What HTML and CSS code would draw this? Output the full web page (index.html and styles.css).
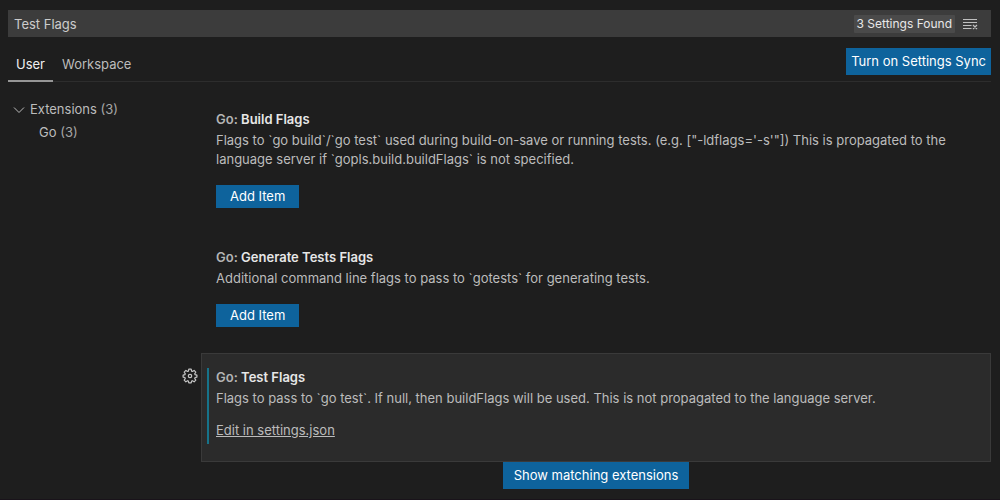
FILE: index.html
```html
<!DOCTYPE html>
<html lang="en">
<head>
<meta charset="utf-8">
<title>Settings</title>
<link rel="stylesheet" href="styles.css">
</head>
<body>
<div class="settings">
  <header class="search">
    <input class="search-input" type="text" value="Test Flags" aria-label="Search settings">
    <span class="count">3 Settings Found</span>
    <button class="icon-button clear" type="button" aria-label="Clear settings search">
      <svg width="16" height="14" viewBox="0 0 16 14" fill="none" stroke="currentColor"><path d="M1 2.500h14M1 5.500h14M1 8.500h8.500M1 11.500h8.500M11 8l4 4M15 8l-4 4" stroke-width="1.200"/></svg>
    </button>
  </header>
  <nav class="tabs">
    <div class="tab-list">
      <button class="tab active" type="button">User</button>
      <button class="tab" type="button">Workspace</button>
    </div>
    <button class="button sync" type="button">Turn on Settings Sync</button>
  </nav>
  <div class="body">
    <aside class="toc">
      <div class="toc-row">
        <svg class="chevron" width="12" height="12" viewBox="0 0 12 12" fill="none" stroke="currentColor"><path d="M1 3.500l5 5 5-5"/></svg>
        <span>Extensions <span class="num">(3)</span></span>
      </div>
      <div class="toc-row child"><span>Go <span class="num">(3)</span></span></div>
    </aside>
    <main class="list">
      <section class="row">
        <div class="item">
          <h2 class="title"><span class="category">Go:</span> Build Flags</h2>
          <p class="desc">Flags to `go build`/`go test` used during build-on-save or running tests. (e.g. ["-ldflags='-s'"]) This is propagated to the language server if `gopls.build.buildFlags` is not specified.</p>
          <button class="button add" type="button">Add Item</button>
        </div>
      </section>
      <section class="row">
        <div class="item">
          <h2 class="title"><span class="category">Go:</span> Generate Tests Flags</h2>
          <p class="desc">Additional command line flags to pass to `gotests` for generating tests.</p>
          <button class="button add" type="button">Add Item</button>
        </div>
      </section>
      <section class="row">
        <button class="icon-button gear" type="button" aria-label="More actions">
          <svg width="16" height="16" viewBox="0 0 16 16" fill="none" stroke="currentColor" stroke-width="1.200" stroke-linejoin="round"><path d="M6.800 1.200h2.400l.4 1.900.8.400 1.700-1.100 1.700 1.700-1.100 1.700.4.900 1.800.4v2l-1.800.400-.4.900 1.100 1.700-1.700 1.700-1.700-1.100-.8.400-.4 1.800H6.800l-.4-1.800-.8-.4-1.700 1.100-1.700-1.700 1.100-1.700-.4-.9-1.800-.4v-2l1.800-.4.400-.9-1.100-1.700 1.700-1.700 1.700 1.100.8-.4z"/><circle cx="8" cy="8" r="1.700"/></svg>
        </button>
        <div class="item focused">
          <div class="modified">
            <h2 class="title"><span class="category">Go:</span> Test Flags</h2>
            <p class="desc">Flags to pass to `go test`. If null, then buildFlags will be used. This is not propagated to the language server.</p>
            <a class="edit" href="#">Edit in settings.json</a>
          </div>
        </div>
      </section>
      <div class="more">
        <button class="button matching" type="button">Show matching extensions</button>
      </div>
    </main>
  </div>
</div>
</body>
</html>
```
FILE: styles.css
```css
* { box-sizing: border-box; }
body {
  margin: 0;
  background: #1e1e1e;
  color: #bcbcbc;
  font: 13px/19px Inter, "Liberation Sans", sans-serif;
}
button, input { font: inherit; border: 0; border-radius: 0; }
button { cursor: pointer; padding: 0; background: none; color: inherit; }
.settings {
  min-height: 100vh;
  padding: 10px 9px 0 8px;
  border-bottom: 1px solid #19131a;
}
.search {
  display: flex;
  align-items: center;
  height: 27px;
  padding-right: 13px;
  background: #3c3c3c;
}
.search-input {
  flex: 1;
  min-width: 0;
  height: 27px;
  padding: 0 6px;
  background: transparent;
  color: #cccccc;
  outline: none;
}
.count {
  padding: 0 3px;
  background: #4a4a4a;
  color: #e8e8e8;
  font-size: 12px;
  line-height: 18px;
  border-radius: 1px;
}
.icon-button { display: flex; }
.clear { margin-left: 7px; color: #c0c0c0; }
.tabs {
  display: flex;
  justify-content: space-between;
  align-items: flex-start;
  height: 45px;
  padding-top: 11px;
  border-bottom: 1px solid #2d2d2d;
}
.tab-list { display: flex; gap: 1px; }
.tab {
  height: 34px;
  padding: 0 8px;
  border-bottom: 2px solid transparent;
}
.tab.active { color: #f0f0f0; border-bottom-color: #969696; }
.button { background: #0e639c; color: #fff; white-space: nowrap; }
.sync { height: 27px; padding: 0 5px; }
.body { display: flex; padding-top: 14px; }
.toc { flex: 0 0 174px; padding: 2px 0 0 5px; }
.toc-row { display: flex; align-items: center; gap: 5px; height: 23px; }
.toc-row.child { padding-left: 26px; }
.num { color: #a6a6a6; }
.list { flex: 1; min-width: 0; }
.row { display: grid; grid-template-columns: 19px minmax(0, 1fr); }
.item { grid-column: 2; padding: 13px 14px 25px; border: 1px solid transparent; }
.title { margin: 0 0 3px; color: #e7e7e7; font-size: 13px; line-height: 18px; font-weight: 600; }
.category { color: #b4b4b4; }
.desc { margin: 0; }
.add { display: block; height: 23px; margin-top: 16px; padding: 0 14px; }
.gear { grid-column: 1; grid-row: 1; align-self: start; margin-top: 15px; color: #c5c5c5; }
.focused { grid-row: 1; padding: 14px 14px 17px 5px; background: #2b2b2b; border-color: #3a3a3a; }
.modified { padding: 0 0 4px 7px; border-left: 2px solid #16738a; }
.edit { display: inline-block; margin-top: 13px; color: inherit; }
.more { display: flex; justify-content: center; padding-left: 19px; }
.matching { height: 27px; padding: 0 11px; }
```
